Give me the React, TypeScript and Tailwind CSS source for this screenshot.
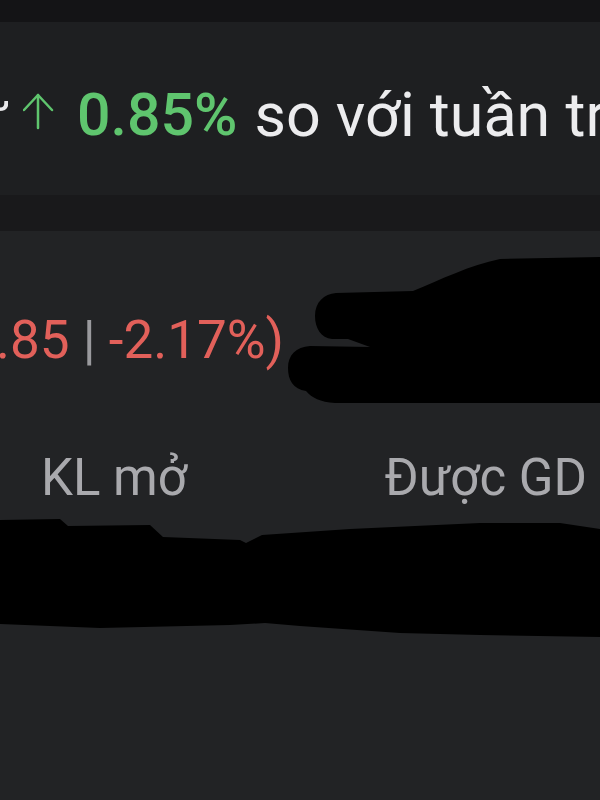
import React from "react";

export default function App() {
  return (
    <div
      className="relative w-[600px] h-[800px] overflow-hidden bg-[#222325]"
      style={{ fontFamily: "Roboto, 'Noto Sans', sans-serif" }}
    >
      <div className="h-[22px] bg-[#141416]" />
      <div className="h-[173px] bg-[#1e1f21] pt-[57px] overflow-hidden">
        <div className="flex items-center whitespace-nowrap text-[61px] leading-[72px]">
          <span className="shrink-0 ml-[-30px] w-[38px] text-[#e8e8ea] overflow-hidden">ư</span>
          <svg width="32" height="72" viewBox="0 0 32 72" className="ml-[15px] shrink-0">
            <g stroke="#5fc56e" strokeWidth="2.5" strokeLinecap="round" strokeLinejoin="round" fill="none">
              <path d="M15 16 L15 49" />
              <path d="M1 31 L15 16 L29 31" />
            </g>
          </svg>
          <span className="shrink-0 ml-[22px] font-medium text-[#5fc56e] text-[59px]">0.85%</span>
          <span className="shrink-0 ml-[17px] text-[#ececee]">so với tuần trước</span>
        </div>
      </div>
      <div className="h-[36px] bg-[#19191b]" />
      <div className="pt-[78px]">
        <div className="whitespace-nowrap text-[53px] leading-[62px] ml-[-4px] text-[#e2605a]">
          .85 <span className="text-[#9a9a9e]">|</span> -2.17%)
        </div>
        <div className="mt-[76px] flex justify-between pl-[41px] pr-[13px] text-[51px] leading-[62px] text-[#a9a9ad]">
          <span>KL mở</span>
          <span>Được GD</span>
        </div>
      </div>

      <svg
        className="absolute inset-0 pointer-events-none"
        width="600"
        height="800"
        viewBox="0 0 600 800"
      >
        <path
          fill="#000"
          d="M413 291 C440 280 470 265 500 259 L600 257 L600 403 L335 403 C320 402 312 398 306 391 C293 389 288 380 288 368 C288 355 296 347 310 346 L370 347 L348 339 L332 339 C321 338 315 328 315 316 C315 302 324 294 336 293 Z"
        />
        <path
          fill="#000"
          d="M0 520 L60 519 L68 526 L150 525 L163 537 L240 540 L246 543 L262 535 L350 529 L480 523 L560 523 L600 529 L600 637 L480 635 L400 633 L300 626 L265 623 L230 625 L100 628 L0 624 Z"
        />
      </svg>
    </div>
  );
}
